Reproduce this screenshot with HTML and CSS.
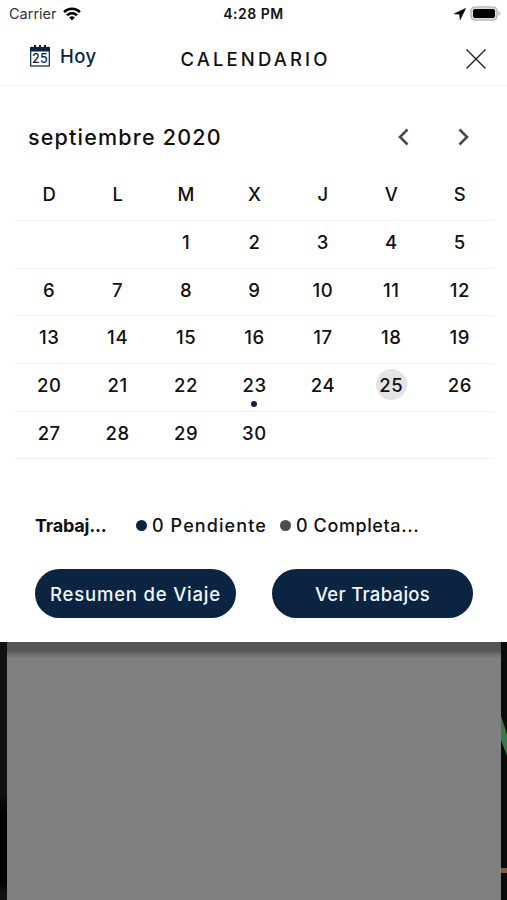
FILE: index.html
```html
<!DOCTYPE html>
<html lang="es">
<head>
  <meta charset="UTF-8">
  <meta name="viewport" content="width=device-width, initial-scale=1.0">
  <title>Calendario</title>
  <link rel="stylesheet" href="styles.css">
</head>
<body>
  <div class="pantalla">
    <div class="hoja">
      <div class="estado">
        <div class="operador">
          <span>Carrier</span>
          <svg width="18" height="14" viewBox="0 0 18 14" fill="none" stroke="#000" stroke-width="2.5">
            <path d="M1 5.1a11.5 11.5 0 0 1 16 0"/>
            <path d="M4 8.3a7.2 7.2 0 0 1 10 0"/>
            <path d="M9 13.5 6.2 10.6a4 4 0 0 1 5.6 0z" fill="#000" stroke="none"/>
          </svg>
        </div>
        <span class="hora">4:28 PM</span>
        <div class="bateria">
          <svg width="12" height="12" viewBox="0 0 12 12"><path d="M11.6.4.3 5.8l5.4.4.4 5.5z" stroke="#000" stroke-width=".6"/></svg>
          <svg width="31" height="16" viewBox="0 0 31 16">
            <rect x="1" y="1" width="26" height="13" rx="4" fill="#ddd" stroke="#bdbdbd" stroke-width="1.6"/>
            <rect x="3" y="3" width="22" height="9" rx="2"/>
            <path d="M28.5 5.2c2.6.8 2.6 3.8 0 4.6z" fill="#bdbdbd"/>
          </svg>
        </div>
      </div>

      <div class="cabecera">
        <div class="hoy">
          <svg width="20" height="22" viewBox="0 0 20 22">
            <rect x=".7" y="2.5" width="18.6" height="18.5" fill="#fff" stroke="#0a2441" stroke-width="1.2"/>
            <path d="M0 2h20v4.5H0zM4 0h2v3H4zM9 0h2v3H9zM14 0h2v3h-2z" fill="#0a2441"/>
            <text x="10" y="18.3" class="icono-dia">25</text>
          </svg>
          <span>Hoy</span>
        </div>
        <h1 class="titulo">CALENDARIO</h1>
        <svg class="cerrar" width="20" height="20" viewBox="0 0 20 20" stroke="#222" stroke-width="1.4"><path d="M.5.5l19 19M19.5.5l-19 19"/></svg>
      </div>

      <div class="mes">
        <span class="mes-nombre">septiembre 2020</span>
        <div class="flechas">
          <svg width="11" height="18" viewBox="0 0 11 18"><path d="M9.5 1.5 2 9l7.5 7.5"/></svg>
          <svg width="11" height="18" viewBox="0 0 11 18"><path d="M1.5 1.5 9 9l-7.5 7.5"/></svg>
        </div>
      </div>

      <div class="calendario">
        <div class="semana nombres"><span>D</span><span>L</span><span>M</span><span>X</span><span>J</span><span>V</span><span>S</span></div>
        <div class="semana"><span></span><span></span><span>1</span><span>2</span><span>3</span><span>4</span><span>5</span></div>
        <div class="semana"><span>6</span><span>7</span><span>8</span><span>9</span><span>10</span><span>11</span><span>12</span></div>
        <div class="semana"><span>13</span><span>14</span><span>15</span><span>16</span><span>17</span><span>18</span><span>19</span></div>
        <div class="semana"><span>20</span><span>21</span><span>22</span><span class="evento">23</span><span>24</span><span class="actual">25</span><span>26</span></div>
        <div class="semana"><span>27</span><span>28</span><span>29</span><span>30</span><span></span><span></span><span></span></div>
      </div>

      <div class="resumen">
        <span class="trabajos">Trabaj...</span>
        <span class="pendiente"><i class="punto"></i><span>0 Pendiente</span></span>
        <span class="completa"><i class="punto gris"></i><span>0 Completa...</span></span>
      </div>

      <div class="botones">
        <button class="boton viaje">Resumen de Viaje</button>
        <button class="boton ver">Ver Trabajos</button>
      </div>
    </div>

    <div class="fondo">
      <div class="borde"></div>
      <div class="panel"></div>
      <svg class="mapa" width="6" height="258" viewBox="0 0 6 258">
        <path d="M0 74 6 92v22L0 98z" fill="#347c48"/>
        <path d="M0 226h6v5H0z" fill="#8a583a"/>
      </svg>
    </div>
  </div>
</body>
</html>
```

FILE: styles.css
```css
* {
  box-sizing: border-box;
}
body {
  margin: 0;
  font-family: Inter, "Liberation Sans", sans-serif;
  font-weight: 500;
  color: #111;
  background: #fff;
}
.pantalla {
  display: flex;
  flex-direction: column;
  width: 507px;
  height: 900px;
  overflow: hidden;
}
.hoja {
  height: 642px;
  background: #fff;
}
.estado {
  display: grid;
  grid-template-columns: 1fr auto 1fr;
  align-items: center;
  height: 27px;
  padding: 0 6px;
  font-size: 14.5px;
}
.operador {
  display: flex;
  align-items: center;
  gap: 6px;
  padding-left: 3px;
  font-weight: 400;
  color: #333;
}
.hora {
  font-weight: 600;
  font-size: 14px;
  letter-spacing: 0.5px;
}
.bateria {
  display: flex;
  justify-content: flex-end;
  align-items: center;
  gap: 4px;
}
.cabecera {
  display: grid;
  grid-template-columns: 1fr auto 1fr;
  align-items: center;
  height: 59px;
  padding: 6px 21px 0;
  border-bottom: 1px solid #f0f0f0;
}
.hoy {
  display: flex;
  align-items: center;
  gap: 10px;
  padding: 0 0 6px 9px;
  font-size: 18.5px;
  letter-spacing: 0.4px;
  color: #0a2441;
}
.icono-dia {
  font-size: 12.5px;
  font-weight: 500;
  text-anchor: middle;
  fill: #0a2441;
}
.titulo {
  margin: 0 -2px 0 2px;
  font-size: 18.5px;
  font-weight: 500;
  letter-spacing: 3.1px;
}
.cerrar {
  justify-self: end;
}
.mes {
  display: flex;
  justify-content: space-between;
  align-items: center;
  height: 82px;
  padding: 19px 38px 0 28px;
}
.mes-nombre {
  font-size: 21.5px;
  letter-spacing: 1.2px;
}
.flechas {
  display: flex;
  gap: 49px;
}
.flechas path {
  fill: none;
  stroke: #4a4a4a;
  stroke-width: 2.6;
}
.calendario {
  width: 479px;
  margin-left: 15px;
}
.semana {
  display: grid;
  grid-template-columns: repeat(7, 1fr);
  justify-items: center;
  height: 47.7px;
  padding-top: 5px;
  border-bottom: 1px solid #f3f3f3;
  font-size: 18.5px;
  line-height: 32px;
  letter-spacing: 0.6px;
}
.nombres {
  height: 53px;
  padding-top: 10px;
  letter-spacing: 0;
}
.evento {
  position: relative;
}
.evento::after {
  content: "";
  position: absolute;
  left: calc(50% - 3px);
  top: 32px;
  width: 6px;
  height: 6px;
  border-radius: 50%;
  background: #0a2441;
}
.actual {
  width: 31px;
  height: 31px;
  border-radius: 50%;
  text-align: center;
  background: #e4e4e4;
}
.resumen {
  display: flex;
  align-items: center;
  height: 30px;
  margin-top: 51px;
  padding-left: 35px;
  font-size: 18px;
}
.trabajos {
  width: 101px;
  font-weight: 700;
  letter-spacing: -0.2px;
}
.pendiente,
.completa {
  display: flex;
  align-items: center;
  gap: 5px;
  white-space: nowrap;
}
.pendiente {
  width: 144px;
  letter-spacing: 1.1px;
}
.completa {
  letter-spacing: 0.6px;
}
.punto {
  width: 11px;
  height: 11px;
  border-radius: 50%;
  background: #0a2441;
}
.gris {
  background: #4d4d4d;
}
.botones {
  display: flex;
  gap: 36px;
  padding: 29px 34px 0 35px;
}
.boton {
  width: 201px;
  height: 49px;
  padding: 0;
  border: 0;
  border-radius: 25px;
  font: inherit;
  font-size: 18.5px;
  color: #f1f7fc;
  background: #0a2441;
  white-space: nowrap;
}
.viaje {
  letter-spacing: 0.8px;
}
.ver {
  letter-spacing: 0.3px;
}
.fondo {
  display: flex;
  flex: 1;
  background: #0b0b0b;
}
.borde {
  width: 7px;
  background: linear-gradient(#111 0 150px, #000 172px 240px, #111 250px);
}
.panel {
  width: 494px;
  background: linear-gradient(#555 0 8px, #808080 16px);
}
```
